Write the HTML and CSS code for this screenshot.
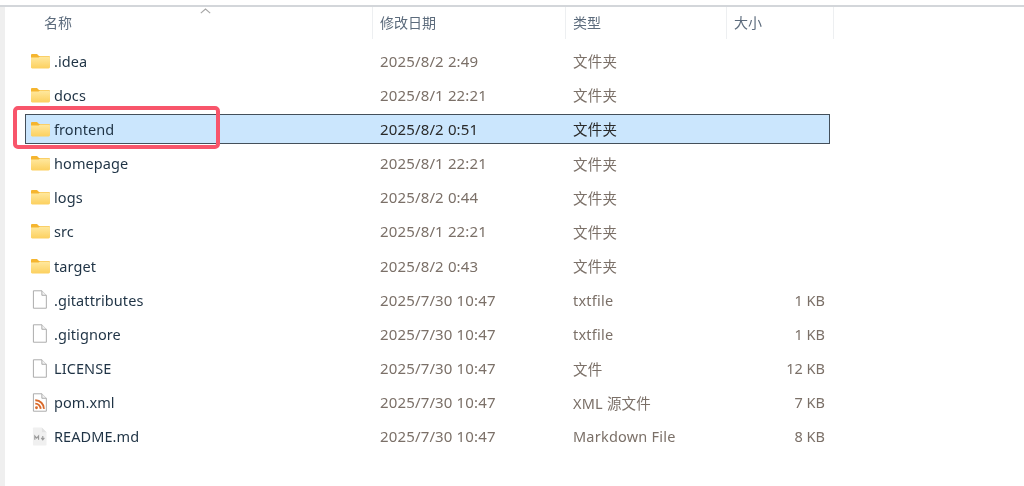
FILE: index.html
```html
<!DOCTYPE html>
<html lang="zh">
<head>
<meta charset="utf-8">
<title>Explorer</title>
<link rel="stylesheet" href="styles.css">
</head>
<body>
<svg class="defs" width="0" height="0" aria-hidden="true">
  <defs>
    <linearGradient id="fg" x1="0" y1="0" x2="0" y2="1"><stop offset="0" stop-color="#ffe9a0"/><stop offset="1" stop-color="#fcd05f"/></linearGradient>
    <symbol id="folder" viewBox="0 0 20 16">
      <path d="M1 2.2C1 1.5 1.5 1 2.2 1H7l2 2h9.6c.8 0 1.4.6 1.4 1.4V6H1z" fill="#f5b52f"/>
      <path d="M1 4.6h7.6L10 3.4h8.6c.8 0 1.4.6 1.4 1.4v9.2c0 .8-.6 1.4-1.4 1.4H2.2C1.500 15.400 1 14.900 1 14.200z" fill="url(#fg)"/>
    </symbol>
    <symbol id="file" viewBox="0 0 16 20">
      <path d="M1.500 .7H10.500L15.300 5.500V19.300H1.500z" fill="#fff" stroke="#a8a8a8"/>
      <path d="M10.500 .7V5.500H15.300" fill="#f2f2f2" stroke="#a8a8a8"/>
    </symbol>
    <symbol id="xml" viewBox="0 0 16 20">
      <path d="M1.500 .7H10.500L15.300 5.500V19.300H1.500z" fill="#fff" stroke="#a8a8a8"/>
      <path d="M10.500 .7V5.500H15.300" fill="#f2f2f2" stroke="#a8a8a8"/>
      <circle cx="4.800" cy="15.600" r="1.500" fill="#d9692a"/>
      <path d="M3.500 11.200a5.400 5.400 0 0 1 5.600 5.600M3.500 7.600a9 9 0 0 1 9.200 9.200" fill="none" stroke="#d9692a" stroke-width="2"/>
    </symbol>
    <symbol id="md" viewBox="0 0 16 20">
      <path d="M1 1.200C1 .8 1.300 .5 1.700 .5H10.500L15.500 5.500V18.800C15.500 19.200 15.200 19.500 14.800 19.500H1.700C1.300 19.500 1 19.200 1 18.800z" fill="#f0f0f0"/>
      <path d="M10.500 .5V5.500H15.500" fill="#e2e2e2"/>
      <path d="M3 13.500V9.500L5 11.800 7 9.500V13.500M11.500 9.500V13M9.800 11.500L11.500 13.500 13.200 11.500" fill="none" stroke="#9a9a9a" stroke-width="1.200"/>
    </symbol>
  </defs>
</svg>
<main class="window">
  <div class="header">
    <div class="hcol hname">名称<span class="sort"><svg width="11" height="6" viewBox="0 0 11 6"><path d="M.8 5.200L5.500 1l4.700 4.200" fill="none" stroke="#a5a5a5" stroke-width="1.100"/></svg></span></div>
    <div class="hcol hdate">修改日期</div>
    <div class="hcol htype">类型</div>
    <div class="hcol hsize">大小</div>
  </div>
  <div class="rows">
    <div class="row"><svg class="icon"><use href="#folder"/></svg><span class="name">.idea</span><span class="date">2025/8/2 2:49</span><span class="type">文件夹</span><span class="size"></span></div>
    <div class="row"><svg class="icon"><use href="#folder"/></svg><span class="name">docs</span><span class="date">2025/8/1 22:21</span><span class="type">文件夹</span><span class="size"></span></div>
    <div class="row selected"><svg class="icon"><use href="#folder"/></svg><span class="name">frontend</span><span class="date">2025/8/2 0:51</span><span class="type">文件夹</span><span class="size"></span></div>
    <div class="row"><svg class="icon"><use href="#folder"/></svg><span class="name">homepage</span><span class="date">2025/8/1 22:21</span><span class="type">文件夹</span><span class="size"></span></div>
    <div class="row"><svg class="icon"><use href="#folder"/></svg><span class="name">logs</span><span class="date">2025/8/2 0:44</span><span class="type">文件夹</span><span class="size"></span></div>
    <div class="row"><svg class="icon"><use href="#folder"/></svg><span class="name">src</span><span class="date">2025/8/1 22:21</span><span class="type">文件夹</span><span class="size"></span></div>
    <div class="row"><svg class="icon"><use href="#folder"/></svg><span class="name">target</span><span class="date">2025/8/2 0:43</span><span class="type">文件夹</span><span class="size"></span></div>
    <div class="row"><svg class="icon doc"><use href="#file"/></svg><span class="name">.gitattributes</span><span class="date">2025/7/30 10:47</span><span class="type">txtfile</span><span class="size">1 KB</span></div>
    <div class="row"><svg class="icon doc"><use href="#file"/></svg><span class="name">.gitignore</span><span class="date">2025/7/30 10:47</span><span class="type">txtfile</span><span class="size">1 KB</span></div>
    <div class="row"><svg class="icon doc"><use href="#file"/></svg><span class="name">LICENSE</span><span class="date">2025/7/30 10:47</span><span class="type">文件</span><span class="size">12 KB</span></div>
    <div class="row"><svg class="icon doc"><use href="#xml"/></svg><span class="name">pom.xml</span><span class="date">2025/7/30 10:47</span><span class="type">XML 源文件</span><span class="size">7 KB</span></div>
    <div class="row"><svg class="icon doc"><use href="#md"/></svg><span class="name">README.md</span><span class="date">2025/7/30 10:47</span><span class="type">Markdown File</span><span class="size">8 KB</span></div>
  </div>
  <div class="callout"></div>
</main>
</body>
</html>
```
FILE: styles.css
```css
* { box-sizing: border-box; }
html, body { margin: 0; height: 100%; background: #fff; overflow: hidden; }
.defs { position: absolute; }
.window {
  position: relative;
  width: 1024px;
  height: 486px;
  padding-top: 7px;
  background: #fff;
  font-family: "Noto Sans", "Noto Sans CJK SC", sans-serif;
  font-size: 14.5px;
  filter: blur(0.3px);
}
.window::before {
  content: "";
  position: absolute;
  left: 0; top: 0; right: 0;
  height: 7px;
  background: linear-gradient(#fff 0 5px, #d3d6da 5px 7px);
}
.window::after {
  content: "";
  position: absolute;
  left: 0; top: 7px; bottom: 0;
  width: 5px;
  background: #efefef;
}
.header {
  display: flex;
  height: 32px;
  padding-left: 44px;
  color: #5c6b7c;
  font-family: "Noto Sans CJK SC", sans-serif;
  font-size: 14px;
}
.hcol {
  display: flex;
  align-items: center;
  height: 32px;
  padding-bottom: 3px;
  position: relative;
  border-right: 1px solid #edeff1;
}
.hname { width: 329px; }
.hdate { width: 193px; padding-left: 7px; }
.htype { width: 161px; padding-left: 7px; }
.hsize { width: 107px; padding-left: 7px; }
.sort { position: absolute; left: 156px; top: 1px; line-height: 0; }
.rows { padding: 7px 0 0 25px; }
.row {
  display: flex;
  align-items: center;
  width: 805px;
  height: 30px;
  margin-bottom: 4.180px;
  padding-bottom: 1px;
  border: 1px solid transparent;
  color: #7b7068;
}
.row.selected {
  background: #cbe6fd;
  border: 1px solid #444f5a;
  color: #2a2a2a;
}
.icon { width: 20px; height: 16px; margin-left: 4px; flex: none; }
.icon.doc { width: 15px; height: 19px; margin-left: 6px; margin-right: 3px; }
.name { width: 324px; padding-left: 4px; color: #1f3345; flex: none; white-space: nowrap; letter-spacing: .08px; }
.date { width: 193px; flex: none; padding-left: 6px; font-size: 15px; letter-spacing: .15px; }
.type { width: 160px; flex: none; padding-left: 6px; white-space: nowrap; letter-spacing: .22px; }
.size { width: 98px; flex: none; text-align: right; white-space: nowrap; }
.callout {
  position: absolute;
  left: 13px;
  top: 106px;
  width: 207px;
  height: 43px;
  border: 4px solid #f8556b;
  border-radius: 5px;
}
```
